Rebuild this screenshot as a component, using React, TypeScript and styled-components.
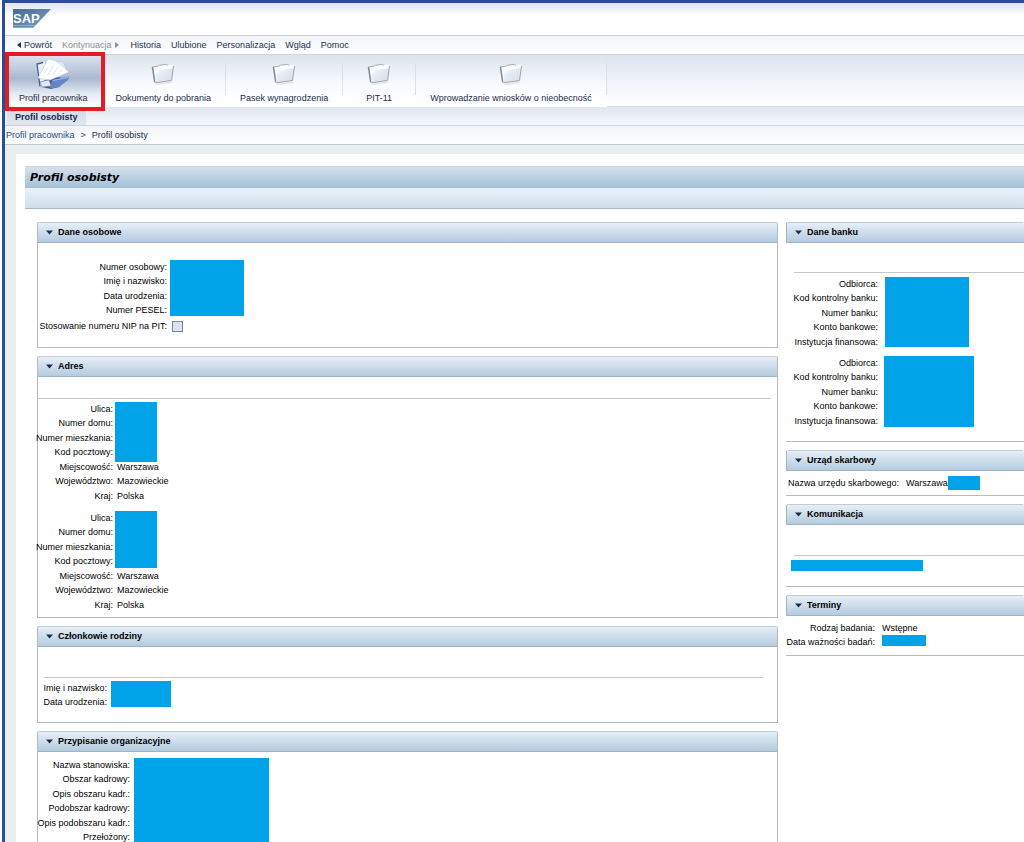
import React from "react";
import styled, { createGlobalStyle, css } from "styled-components";

const sans = '"Liberation Sans", Arial, sans-serif';
const blue = "#00a2e8";
const line = "#c3c7cb";

const GlobalStyle = createGlobalStyle`
  *, *::before, *::after { box-sizing: border-box; }
  body { margin: 0; background: #fff; font: 9px/14px ${sans}; color: #000; }
  button { font: inherit; color: inherit; padding: 0; margin: 0; border: 0; background: none; cursor: pointer; }
  a { color: inherit; text-decoration: none; }
  dl, dt, dd, h1, h2, ul, ol { margin: 0; padding: 0; font: inherit; list-style: none; }
`;

const Frame = styled.div`
  height: 100vh;
  overflow: hidden;
  display: flex;
  flex-direction: column;
  margin-left: 2px;
  border-top: 3px solid #2d4c97;
  border-left: 3px solid #2d4c97;
`;

const Masthead = styled.header`
  flex: none;
  height: 33px;
  padding: 4px 8px;
  border-top: 2px solid #e4edee;
  border-bottom: 1px solid #cdcfd4;
  background: linear-gradient(#e6e8f6, #fff 10px);
`;

const MenuBar = styled.nav`
  flex: none;
  height: 19px;
  display: flex;
  align-items: center;
  gap: 10px;
  padding: 0 12px 1px;
  color: #1d2f4f;
  background: linear-gradient(#f1f4f8, #fff);
  border-bottom: 1px solid #cdd3da;
`;

const MenuButton = styled.button<{ $wide?: boolean }>`
  display: flex;
  align-items: center;
  gap: 3px;
  margin-right: ${(p) => (p.$wide ? "2px" : "0")};
  &:disabled { color: #8e9197; }
`;

const TopNav = styled.nav`
  flex: none;
  height: 52px;
  background: linear-gradient(#dde4ee, #f3f5fa 60%, #fff);
  border-bottom: 1px solid #d9dde3;
`;

const NavList = styled.ul`
  display: flex;
  width: max-content;
  height: 52px;
  background: linear-gradient(#dde4ee, #fafbfd 60%, #fff);
`;

const NavItem = styled.li<{ $selected?: boolean }>`
  position: relative;
  display: flex;
  &:not(:first-child)::after {
    content: "";
    width: 1px;
    margin: 8px 0 12px;
    background: #dcdfe5;
  }
  ${(p) =>
    p.$selected &&
    css`
      background: linear-gradient(#dde3ed, #a9b9d1 45%, #e6ebf3 75%, #fff);
      &::before {
        content: "";
        position: absolute;
        z-index: 1;
        inset: -3px -3px -4px 0;
        border: 4px solid #e51b24;
      }
    `}
`;

const NavLink = styled.a`
  min-width: 72px;
  padding: 2px 14px;
  display: flex;
  flex-direction: column;
  align-items: center;
  justify-content: space-between;
  color: #1c2c4a;
  white-space: nowrap;
`;

const IconSlot = styled.span`
  height: 36px;
  display: flex;
  align-items: center;
`;

const SubNav = styled.nav`
  flex: none;
  height: 19px;
  display: flex;
  align-items: flex-end;
  padding: 0 2px;
  background: linear-gradient(#e0e6ef, #f6f8fb);
  border-bottom: 1px solid #cdd3da;
`;

const SubTab = styled.a`
  padding: 0 8px 1px 8px;
  font-weight: bold;
  color: #17294f;
  background: linear-gradient(#d5dde9, #dfe6ef);
`;

const Breadcrumb = styled.nav`
  flex: none;
  height: 19px;
  display: flex;
  align-items: center;
  gap: 6px;
  padding: 0 1px;
  color: #2a4a7c;
  background: linear-gradient(#f1f4f9, #fff);
  border-bottom: 1px solid #c3cad2;
  & [aria-current] { color: #1c2c4a; }
`;

const Backdrop = styled.div`
  flex: 1;
  min-height: 0;
  overflow: hidden;
  padding: 9px 0 0 11px;
  background: #ebeef1;
`;

const Page = styled.main`
  min-height: 100%;
  padding: 12px 0 0 9px;
  background: #fff;
`;

const PageTitle = styled.h1`
  height: 22px;
  padding: 0 5px;
  border-top: 1px solid #ccd6de;
  background: linear-gradient(#d5e1eb, #a3c0d8);
  font: italic bold 11px/22px "DejaVu Sans", Verdana, sans-serif;
`;

const Toolbar = styled.div`
  height: 21px;
  background: linear-gradient(#eaf1f8, #d0dfea);
  border-bottom: 1px solid #a9b8c6;
`;

const Columns = styled.div`
  display: grid;
  grid-template-columns: minmax(0, 741fr) minmax(0, 238fr);
  gap: 8px;
  padding: 13px 0 0 12px;
`;

const Column = styled.div`
  display: flex;
  flex-direction: column;
  gap: 8px;
`;

const Card = styled.section<{ $open?: boolean; $bottom: number }>`
  padding-bottom: ${(p) => p.$bottom}px;
  border: 1px solid #b3bac1;
  border-top-color: #c2ccd4;
  border-radius: 2px 2px 0 0;
  ${(p) =>
    p.$open &&
    css`
      border-left: 0;
      border-right: 0;
    `}
`;

const CardHeader = styled.h2<{ $open?: boolean }>`
  height: 20px;
  background: linear-gradient(#e6eff7, #b4cbdf);
  border-bottom: 1px solid #9fb4c6;
  border-left: ${(p) => (p.$open ? "1px solid #9fb4c6" : "0")};
`;

const CardToggle = styled.button`
  width: 100%;
  height: 18px;
  display: flex;
  align-items: center;
  gap: 5px;
  padding: 0 8px;
  font-weight: bold;
`;

const Divider = styled.div<{ $top: number; $left?: number; $right?: number }>`
  height: 1px;
  margin: ${(p) => p.$top}px ${(p) => p.$right ?? 0}px 0 ${(p) => p.$left ?? 0}px;
  background: ${line};
`;

const Fields = styled.dl<{ $label: number; $gap: number; $top: number }>`
  display: grid;
  grid-template-columns: ${(p) => p.$label}px minmax(0, 1fr);
  grid-auto-rows: 14px 15px;
  column-gap: ${(p) => p.$gap}px;
  margin-top: ${(p) => p.$top}px;
`;

const Term = styled.dt`
  grid-column: 1;
  justify-self: end;
  white-space: nowrap;
`;

const Value = styled.dd<{ $row: number }>`
  grid-column: 2;
  grid-row: ${(p) => p.$row};
  display: flex;
  padding-left: 2px;
  white-space: nowrap;
`;

const Mask = styled.dd<{ $span: number; $w: number; $h: number }>`
  grid-column: 2;
  grid-row: 1 / span ${(p) => p.$span};
  width: ${(p) => p.$w}px;
  height: ${(p) => p.$h}px;
  background: ${blue};
`;

const InlineMask = styled.span<{ $w: number; $h: number }>`
  display: block;
  width: ${(p) => p.$w}px;
  height: ${(p) => p.$h}px;
  background: ${blue};
`;

const ContactMask = styled(InlineMask)`
  margin: 4px 0 0 5px;
`;

const Tick = styled.input`
  appearance: none;
  width: 11px;
  height: 11px;
  margin: 2px 0 0;
  border: 1px solid #7b8794;
  background: #d9e4f0;
`;

function SapLogo() {
  return (
    <svg width="38" height="20" viewBox="0 0 38 20" role="img" aria-label="SAP">
      <defs>
        <linearGradient id="sap" x1="0" y1="0" x2="1" y2="1">
          <stop offset="0" stopColor="#46698f" />
          <stop offset="1" stopColor="#7aa3cb" />
        </linearGradient>
      </defs>
      <path d="M0 0H38L20 19H0Z" fill="url(#sap)" />
      <path d="M0 16.500H22M0 18.500H20" stroke="#a9c2dc" strokeWidth="0.600" />
      <text x="0" y="14" fontFamily={sans} fontSize="13" fontWeight="bold" fill="#fff">SAP</text>
    </svg>
  );
}

function FolderIcon() {
  return (
    <svg width="24" height="24" viewBox="0 0 24 24" aria-hidden="true">
      <defs>
        <linearGradient id="folder" x1="0" y1="0" x2="1" y2="1">
          <stop offset="0" stopColor="#fff" />
          <stop offset="0.4" stopColor="#e6ecf4" />
          <stop offset="1" stopColor="#d3dce9" />
        </linearGradient>
      </defs>
      <path d="M4 22L20 19.500L22 20.500L7 23Z" fill="#dde1e9" />
      <path d="M1.300 5L7 4.200L8.500 3.200L15.500 2.400L17 3.400L22 3L20 18.500L4 21Z" fill="#fdfdfe" />
      <path d="M1.300 5L7 4.200L8.500 3.200L15.500 2.400L17 3.400" fill="none" stroke="#9ca4b4" strokeWidth="0.900" />
      <path d="M1.500 5L3.800 20.500" stroke="#838b9d" strokeWidth="1.600" />
      <path d="M4.300 20.800L4.800 10.500Q5 8 8 7L22.500 3.800L20.500 18.500Z" fill="url(#folder)" />
      <path d="M4.800 10.500Q5.500 8.300 8.500 7.600L22 5" fill="none" stroke="#fff" strokeWidth="1.600" />
      <path d="M22.500 4L20.500 18.500L4.300 20.800" fill="none" stroke="#929bad" strokeWidth="0.900" />
    </svg>
  );
}

function OpenFolderIcon() {
  return (
    <svg width="36" height="32" viewBox="0 0 36 32" aria-hidden="true">
      <path d="M2 6L10 4L14 10L9 28L5 28.500Z" fill="#e9eff8" />
      <path d="M8 4.500L2 6L5 28.500" fill="none" stroke="#4b5f8d" strokeWidth="1.300" />
      <path d="M5 24L20 19L33 20.500L24 29L16 31L7 29Z" fill="#3f5c99" />
      <path d="M17 22L34 18.500L33 22L24 29L15 30.500Z" fill="#6485c6" />
      <path d="M18 22.500L33 19.500" stroke="#a4bae3" strokeWidth="1.200" />
      <path d="M5 24L14 22L16 28L7 29Z" fill="#e3eaf4" stroke="#7585a4" strokeWidth="0.500" />
      <path d="M11 3L28 4L33 15L12 20Z" fill="#e6ebf4" stroke="#b2bccd" strokeWidth="0.500" />
      <path d="M3 20L13 1L21 3L34 14L20 20L15 22Z" fill="#fff" stroke="#c1c9d6" strokeWidth="0.500" />
      <path d="M9 16L13 9M13 17L18 8M18 17L23 9M23 16L27 12" stroke="#dbe0e9" strokeWidth="0.900" />
    </svg>
  );
}

function Arrow({ dir }: { dir: "left" | "right" | "down" }) {
  if (dir === "down")
    return (
      <svg width="7" height="5" viewBox="0 0 7 5" aria-hidden="true">
        <path d="M0 0.500H7L3.500 4.500Z" fill="#17304f" />
      </svg>
    );
  return (
    <svg width="4" height="6" viewBox="0 0 4 6" aria-hidden="true">
      <path d={dir === "left" ? "M4 0V6L0 3Z" : "M0 0V6L4 3Z"} fill="currentColor" />
    </svg>
  );
}

type TrayProps = { title: string; open?: boolean; bottom: number; children: React.ReactNode };

function Tray({ title, open, bottom, children }: TrayProps) {
  return (
    <Card $open={open} $bottom={bottom}>
      <CardHeader $open={open}>
        <CardToggle type="button" aria-expanded="true">
          <Arrow dir="down" />
          {title}
        </CardToggle>
      </CardHeader>
      {children}
    </Card>
  );
}

type FieldGroupProps = {
  labels: string[];
  label: number;
  gap: number;
  top: number;
  mask?: [span: number, width: number, height: number];
  children?: React.ReactNode;
};

function FieldGroup({ labels, label, gap, top, mask, children }: FieldGroupProps) {
  return (
    <Fields $label={label} $gap={gap} $top={top}>
      {labels.map((text, i) => (
        <Term key={text} style={{ gridRow: i + 1 }}>{text}</Term>
      ))}
      {mask && <Mask $span={mask[0]} $w={mask[1]} $h={mask[2]} />}
      {children}
    </Fields>
  );
}

const addressLabels = [
  "Ulica:",
  "Numer domu:",
  "Numer mieszkania:",
  "Kod pocztowy:",
  "Miejscowość:",
  "Województwo:",
  "Kraj:",
];
const bankLabels = [
  "Odbiorca:",
  "Kod kontrolny banku:",
  "Numer banku:",
  "Konto bankowe:",
  "Instytucja finansowa:",
];
const navItems = [
  "Dokumenty do pobrania",
  "Pasek wynagrodzenia",
  "PIT-11",
  "Wprowadzanie wniosków o nieobecność",
];

function Address({ top, height }: { top: number; height: number }) {
  return (
    <FieldGroup labels={addressLabels} label={75} gap={2} top={top} mask={[4, 42, height]}>
      <Value $row={5}>Warszawa</Value>
      <Value $row={6}>Mazowieckie</Value>
      <Value $row={7}>Polska</Value>
    </FieldGroup>
  );
}

export default function App() {
  return (
    <>
      <GlobalStyle />
      <Frame>
        <Masthead>
          <SapLogo />
        </Masthead>
        <MenuBar>
          <MenuButton type="button"><Arrow dir="left" />Powrót</MenuButton>
          <MenuButton type="button" disabled $wide>Kontynuacja<Arrow dir="right" /></MenuButton>
          {["Historia", "Ulubione", "Personalizacja", "Wgląd", "Pomoc"].map((t) => (
            <MenuButton type="button" key={t}>{t}</MenuButton>
          ))}
        </MenuBar>
        <TopNav>
          <NavList>
            <NavItem $selected>
              <NavLink href="#profil">
                <IconSlot><OpenFolderIcon /></IconSlot>
                Profil pracownika
              </NavLink>
            </NavItem>
            {navItems.map((t) => (
              <NavItem key={t}>
                <NavLink href="#">
                  <IconSlot><FolderIcon /></IconSlot>
                  {t}
                </NavLink>
              </NavItem>
            ))}
          </NavList>
        </TopNav>
        <SubNav>
          <SubTab href="#osobisty">Profil osobisty</SubTab>
        </SubNav>
        <Breadcrumb>
          <a href="#profil">Profil pracownika</a>
          <span>&gt;</span>
          <span aria-current="page">Profil osobisty</span>
        </Breadcrumb>
        <Backdrop>
          <Page>
            <PageTitle>Profil osobisty</PageTitle>
            <Toolbar />
            <Columns>
              <Column>
                <Tray title="Dane osobowe" bottom={14}>
                  <FieldGroup
                    labels={["Numer osobowy:", "Imię i nazwisko:", "Data urodzenia:", "Numer PESEL:"]}
                    label={129}
                    gap={3}
                    top={17}
                    mask={[4, 74, 56]}
                  />
                  <Fields $label={129} $gap={3} $top={1}>
                    <Term><label htmlFor="nip">Stosowanie numeru NIP na PIT:</label></Term>
                    <Value $row={1}><Tick id="nip" type="checkbox" /></Value>
                  </Fields>
                </Tray>
                <Tray title="Adres" bottom={5}>
                  <Divider $top={21} $right={6} />
                  <Address top={3} height={60} />
                  <Address top={8} height={57} />
                </Tray>
                <Tray title="Członkowie rodziny" bottom={12}>
                  <Divider $top={30} $left={6} $right={14} />
                  <FieldGroup labels={["Imię i nazwisko:", "Data urodzenia:"]} label={69} gap={4} top={3} mask={[2, 60, 26]} />
                </Tray>
                <Tray title="Przypisanie organizacyjne" bottom={8}>
                  <FieldGroup
                    labels={[
                      "Nazwa stanowiska:",
                      "Obszar kadrowy:",
                      "Opis obszaru kadr.:",
                      "Podobszar kadrowy:",
                      "Opis podobszaru kadr.:",
                      "Przełożony:",
                    ]}
                    label={92}
                    gap={4}
                    top={6}
                    mask={[6, 135, 87]}
                  />
                </Tray>
              </Column>
              <Column>
                <Tray title="Dane banku" open bottom={13}>
                  <Divider $top={29} $left={8} />
                  <FieldGroup labels={bankLabels} label={92} gap={7} top={4} mask={[5, 84, 70]} />
                  <FieldGroup labels={bankLabels} label={92} gap={6} top={7} mask={[5, 90, 71]} />
                </Tray>
                <Tray title="Urząd skarbowy" open bottom={5}>
                  <FieldGroup labels={["Nazwa urzędu skarbowego:"]} label={113} gap={5} top={5}>
                    <Value $row={1}>Warszawa<InlineMask $w={32} $h={14} /></Value>
                  </FieldGroup>
                </Tray>
                <Tray title="Komunikacja" open bottom={15}>
                  <Divider $top={30} $left={8} />
                  <ContactMask $w={132} $h={11} />
                </Tray>
                <Tray title="Terminy" open bottom={5}>
                  <FieldGroup labels={["Rodzaj badania:", "Data ważności badań:"]} label={89} gap={5} top={5}>
                    <Value $row={1}>Wstępne</Value>
                    <Value $row={2}><InlineMask $w={44} $h={11} /></Value>
                  </FieldGroup>
                </Tray>
              </Column>
            </Columns>
          </Page>
        </Backdrop>
      </Frame>
    </>
  );
}
